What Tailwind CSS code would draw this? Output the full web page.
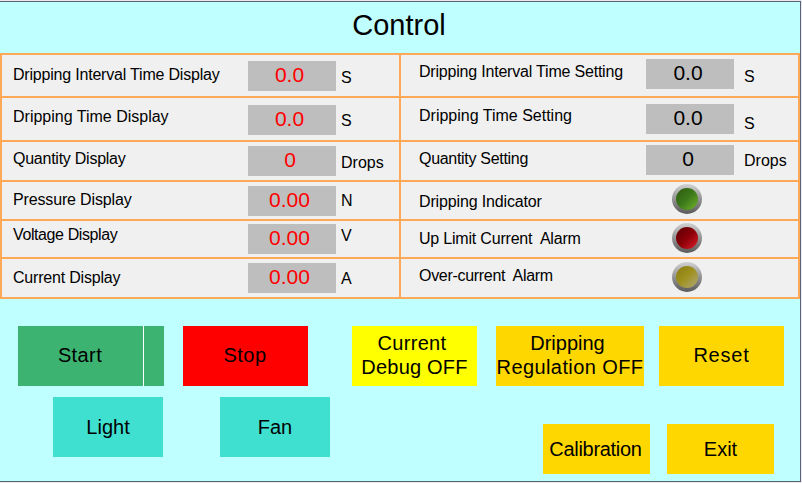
<!DOCTYPE html>
<html lang="en">

<head>
    <meta charset="UTF-8">
    <title>Control</title>
    <script src="https://cdn.jsdelivr.net/npm/@tailwindcss/browser@4"></script>
</head>

<body class="bg-[#e8e8e8] font-['Liberation_Sans',Arial,sans-serif] text-black">
    <div class="w-[802px] h-[483px] pt-px overflow-hidden">
        <div class="w-[801px] h-[481px] bg-[#bfffff] border-t border-b border-r border-[#5a6478]">

            <!-- title -->
            <h1 class="h-[51px] pr-[2px] text-center text-[29px] leading-[46px]">Control</h1>

            <!-- display and setting table -->
            <div class="w-[800px] h-[246px] bg-[#f0f0f0] border-2 border-[#ffa858] text-[16px] leading-[18px]">

                <div class="flex h-[43px] border-b-2 border-[#ffa858]">
                    <div class="flex w-[399px] border-r-2 border-[#ffa858]">
                        <span class="w-[246px] pl-[11px] mt-[11px] tracking-[-0.2px]">Dripping Interval Time Display</span>
                        <div class="w-[88px] h-[30px] mt-[6px] pr-[5px] bg-[#bebebe] text-[#ff0000] text-[21px] leading-[28px] text-center">0.0</div>
                        <span class="ml-[5px] mt-[14px]">S</span>
                    </div>
                    <div class="flex flex-1">
                        <span class="w-[245px] pl-[18px] mt-[8px] tracking-[-0.2px]">Dripping Interval Time Setting</span>
                        <div class="w-[88px] h-[30px] mt-[4px] pr-[4px] bg-[#bebebe] text-[21px] leading-[28px] text-center">0.0</div>
                        <span class="ml-[10px] mt-[13px]">S</span>
                    </div>
                </div>

                <div class="flex h-[44px] border-b-2 border-[#ffa858]">
                    <div class="flex w-[399px] border-r-2 border-[#ffa858]">
                        <span class="w-[246px] pl-[11px] mt-[10px]">Dripping Time Display</span>
                        <div class="w-[88px] h-[30px] mt-[7px] pr-[5px] bg-[#bebebe] text-[#ff0000] text-[21px] leading-[28px] text-center">0.0</div>
                        <span class="ml-[5px] mt-[14px]">S</span>
                    </div>
                    <div class="flex flex-1">
                        <span class="w-[245px] pl-[18px] mt-[9px]">Dripping Time Setting</span>
                        <div class="w-[88px] h-[30px] mt-[6px] pr-[4px] bg-[#bebebe] text-[21px] leading-[28px] text-center">0.0</div>
                        <span class="ml-[10px] mt-[17px]">S</span>
                    </div>
                </div>

                <div class="flex h-[40px] border-b-2 border-[#ffa858]">
                    <div class="flex w-[399px] border-r-2 border-[#ffa858]">
                        <span class="w-[246px] pl-[11px] mt-[8px] tracking-[-0.25px]">Quantity Display</span>
                        <div class="w-[88px] h-[30px] mt-[4px] pr-[4px] bg-[#bebebe] text-[#ff0000] text-[21px] leading-[28px] text-center">0</div>
                        <span class="ml-[5px] mt-[12px]">Drops</span>
                    </div>
                    <div class="flex flex-1">
                        <span class="w-[245px] pl-[18px] mt-[8px] tracking-[-0.3px]">Quantity Setting</span>
                        <div class="w-[88px] h-[30px] mt-[3px] pr-[4px] bg-[#bebebe] text-[21px] leading-[28px] text-center">0</div>
                        <span class="ml-[10px] mt-[10px]">Drops</span>
                    </div>
                </div>

                <div class="flex h-[39px] border-b-2 border-[#ffa858]">
                    <div class="flex w-[399px] border-r-2 border-[#ffa858]">
                        <span class="w-[246px] pl-[11px] mt-[9px] tracking-[-0.15px]">Pressure Display</span>
                        <div class="w-[88px] h-[30px] mt-[4px] pr-[5px] bg-[#bebebe] text-[#ff0000] text-[21px] leading-[28px] text-center">0.00</div>
                        <span class="ml-[5px] mt-[10px]">N</span>
                    </div>
                    <div class="flex flex-1">
                        <span class="w-[271px] pl-[18px] mt-[11px] tracking-[-0.15px]">Dripping Indicator</span>
                        <div class="mt-[2px] size-[30px] rounded-full p-[4px] bg-gradient-to-b from-[#d2d2d2] to-[#5a5a5a]">
                            <div class="size-[22px] rounded-full bg-gradient-to-br from-[#2c5a10] via-[#3d7a1a] to-[#74b52c]"></div>
                        </div>
                    </div>
                </div>

                <div class="flex h-[38px] border-b-2 border-[#ffa858]">
                    <div class="flex w-[399px] border-r-2 border-[#ffa858]">
                        <span class="w-[246px] pl-[11px] mt-[5px] tracking-[-0.4px]">Voltage Display</span>
                        <div class="w-[88px] h-[30px] mt-[3px] pr-[5px] bg-[#bebebe] text-[#ff0000] text-[21px] leading-[28px] text-center">0.00</div>
                        <span class="ml-[5px] mt-[6px]">V</span>
                    </div>
                    <div class="flex flex-1">
                        <span class="w-[271px] pl-[18px] mt-[9px] tracking-[-0.2px]">Up Limit Current&nbsp; Alarm</span>
                        <div class="mt-[2px] size-[30px] rounded-full p-[4px] bg-gradient-to-b from-[#d2d2d2] to-[#5a5a5a]">
                            <div class="size-[22px] rounded-full bg-gradient-to-br from-[#5a0004] via-[#8c0008] to-[#e0202a]"></div>
                        </div>
                    </div>
                </div>

                <div class="flex h-[38px]">
                    <div class="flex w-[399px] border-r-2 border-[#ffa858]">
                        <span class="w-[246px] pl-[11px] mt-[10px] tracking-[-0.2px]">Current Display</span>
                        <div class="w-[88px] h-[30px] mt-[4px] pr-[5px] bg-[#bebebe] text-[#ff0000] text-[21px] leading-[28px] text-center">0.00</div>
                        <span class="ml-[5px] mt-[11px]">A</span>
                    </div>
                    <div class="flex flex-1">
                        <span class="w-[271px] pl-[18px] mt-[8px] tracking-[-0.3px]">Over-current&nbsp; Alarm</span>
                        <div class="mt-[3px] size-[30px] rounded-full p-[4px] bg-gradient-to-b from-[#d2d2d2] to-[#5a5a5a]">
                            <div class="size-[22px] rounded-full bg-gradient-to-br from-[#8a7c10] via-[#a0921e] to-[#b0a870]"></div>
                        </div>
                    </div>
                </div>
            </div>

            <!-- buttons -->
            <div class="flex pl-[18px] pt-[27px] text-[20px] leading-[24px]">
                <div class="flex w-[146px] h-[60px] bg-[#3cb371]">
                    <div class="w-[126px] h-full pb-[2px] pr-[1px] border-r border-white flex items-center justify-center tracking-[0.4px]">Start</div>
                </div>
                <div class="w-[125px] h-[60px] pb-[2px] pr-[1px] ml-[19px] bg-[#ff0000] flex items-center justify-center tracking-[0.5px]">Stop</div>
                <div class="w-[125px] h-[60px] pb-[2px] ml-[44px] bg-[#ffff00] flex flex-col items-center justify-center">
                    <span class="pr-[5px] tracking-[0.3px]">Current</span>
                    <span class="tracking-[0.2px]">Debug OFF</span>
                </div>
                <div class="w-[148px] h-[60px] pb-[2px] ml-[19px] bg-[#ffd700] flex flex-col items-center justify-center">
                    <span class="pr-[5px]">Dripping</span>
                    <span class="tracking-[0.4px]">Regulation OFF</span>
                </div>
                <div class="w-[125px] h-[60px] pb-[2px] ml-[15px] bg-[#ffd700] flex items-center justify-center tracking-[0.8px]">Reset</div>
            </div>

            <div class="flex items-start pl-[53px] pt-[11px] text-[20px] leading-[24px]">
                <div class="w-[110px] h-[60px] bg-[#40e0d0] flex items-center justify-center">Light</div>
                <div class="w-[110px] h-[60px] ml-[57px] bg-[#40e0d0] flex items-center justify-center">Fan</div>
                <div class="w-[107px] h-[50px] ml-[213px] mt-[27px] pr-[2px] bg-[#ffd700] flex items-center justify-center tracking-[-0.3px]">Calibration</div>
                <div class="w-[107px] h-[50px] ml-[17px] mt-[27px] bg-[#ffd700] flex items-center justify-center">Exit</div>
            </div>
        </div>
    </div>
</body>

</html>
